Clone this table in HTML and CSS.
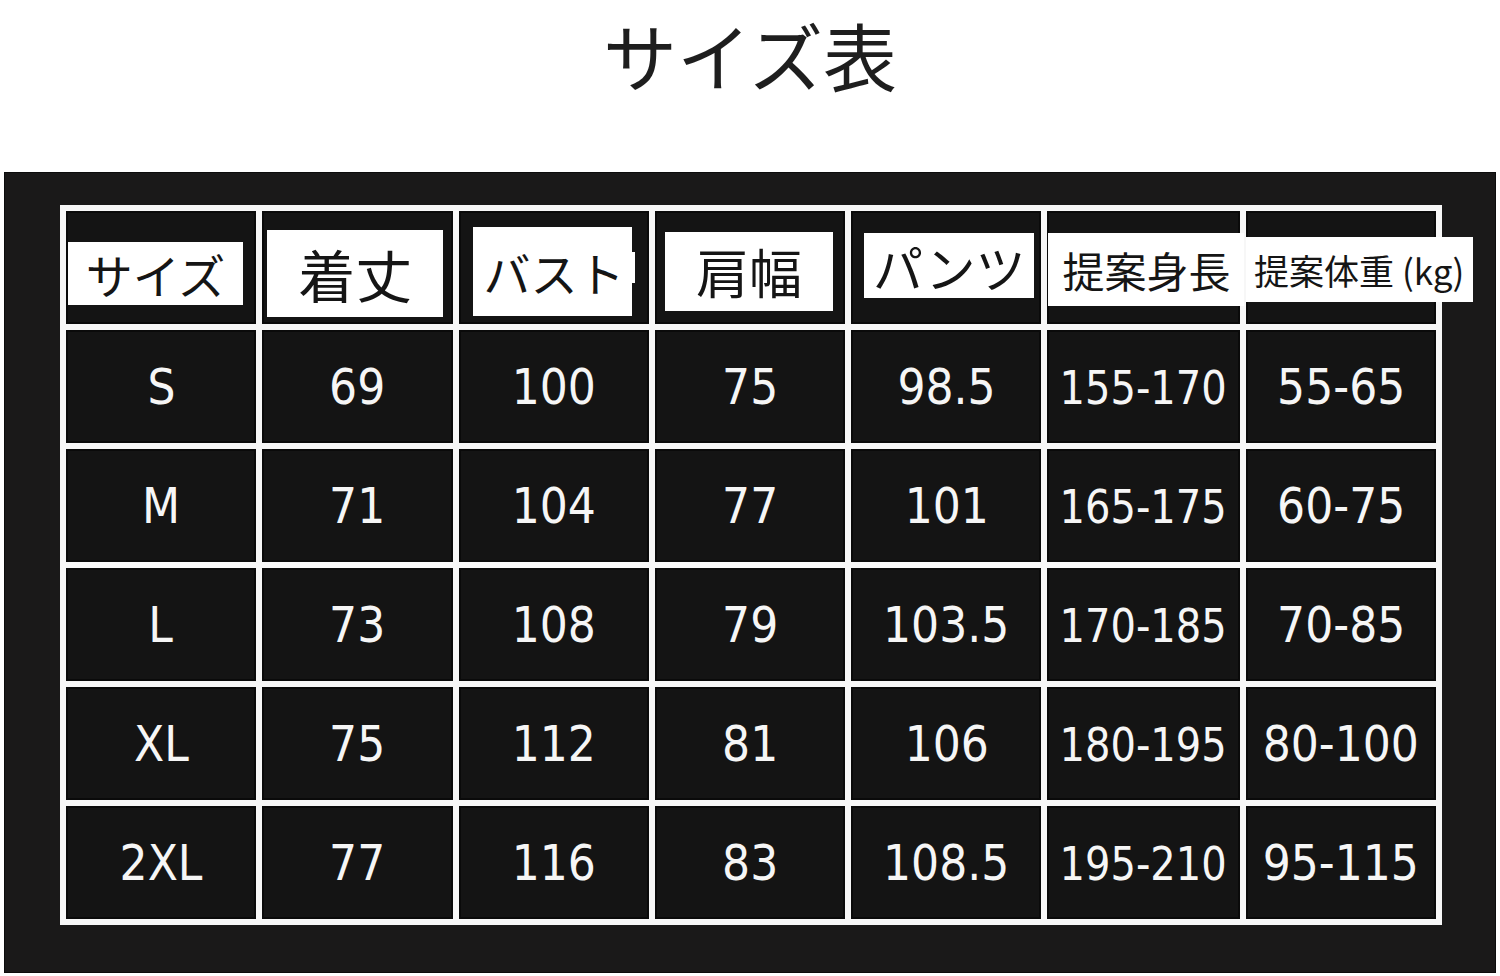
FILE: index.html
```html
<!DOCTYPE html>
<html lang="ja">
<head>
<meta charset="utf-8">
<title>サイズ表</title>
<link rel="stylesheet" href="styles.css">
</head>
<body>
<h1 class="title">サイズ表</h1>
<section class="panel">
  <div class="grid">
    <div class="cell head"><span class="label l1">サイズ</span></div>
    <div class="cell head"><span class="label l2">着丈</span></div>
    <div class="cell head"><span class="label l3">バスト</span><span class="sliver"></span></div>
    <div class="cell head"><span class="label l4">肩幅</span></div>
    <div class="cell head"><span class="label l5">パンツ</span></div>
    <div class="cell head"><span class="label l6">提案身長</span></div>
    <div class="cell head"><span class="label l7">提案体重 (kg)</span></div>

    <div class="cell"><span class="v">S</span></div>
    <div class="cell"><span class="v">69</span></div>
    <div class="cell"><span class="v">100</span></div>
    <div class="cell"><span class="v">75</span></div>
    <div class="cell"><span class="v">98.5</span></div>
    <div class="cell"><span class="v narrow">155-170</span></div>
    <div class="cell"><span class="v">55-65</span></div>

    <div class="cell"><span class="v">M</span></div>
    <div class="cell"><span class="v">71</span></div>
    <div class="cell"><span class="v">104</span></div>
    <div class="cell"><span class="v">77</span></div>
    <div class="cell"><span class="v">101</span></div>
    <div class="cell"><span class="v narrow">165-175</span></div>
    <div class="cell"><span class="v">60-75</span></div>

    <div class="cell"><span class="v">L</span></div>
    <div class="cell"><span class="v">73</span></div>
    <div class="cell"><span class="v">108</span></div>
    <div class="cell"><span class="v">79</span></div>
    <div class="cell"><span class="v">103.5</span></div>
    <div class="cell"><span class="v narrow">170-185</span></div>
    <div class="cell"><span class="v">70-85</span></div>

    <div class="cell"><span class="v">XL</span></div>
    <div class="cell"><span class="v">75</span></div>
    <div class="cell"><span class="v">112</span></div>
    <div class="cell"><span class="v">81</span></div>
    <div class="cell"><span class="v">106</span></div>
    <div class="cell"><span class="v narrow">180-195</span></div>
    <div class="cell"><span class="v">80-100</span></div>

    <div class="cell"><span class="v">2XL</span></div>
    <div class="cell"><span class="v">77</span></div>
    <div class="cell"><span class="v">116</span></div>
    <div class="cell"><span class="v">83</span></div>
    <div class="cell"><span class="v">108.5</span></div>
    <div class="cell"><span class="v narrow">195-210</span></div>
    <div class="cell"><span class="v">95-115</span></div>
  </div>
</section>
</body>
</html>
```

FILE: styles.css
```css
html, body {
  margin: 0;
  padding: 0;
  background: #ffffff;
}

body {
  width: 1500px;
  height: 976px;
  overflow: hidden;
  font-family: "Noto Sans CJK JP", "Noto Sans", sans-serif;
}

.title {
  margin: 0;
  height: 172px;
  font-family: "Noto Sans CJK JP", sans-serif;
  font-weight: 400;
  font-size: 74px;
  line-height: normal;
  text-align: center;
  color: #1e1e1e;
  letter-spacing: 0;
}

.panel {
  margin-left: 4px;
  width: 1492px;
  height: 801px;
  box-sizing: border-box;
  padding: 33px 54px 48px 56px;
  background: #1a1919;
  box-shadow: inset 0 0 0 1px #0c0c0c;
}

.grid {
  display: grid;
  grid-template-columns: repeat(7, 1fr);
  grid-template-rows: repeat(6, 1fr);
  gap: 6px;
  padding: 6px;
  height: 720px;
  box-sizing: border-box;
  background: #f7f7f7;
}

.cell {
  position: relative;
  display: flex;
  align-items: center;
  justify-content: center;
  background: #141414;
  box-shadow: inset 0 0 0 2px #0a0a0a;
}

.v {
  display: inline-block;
  font-family: "DejaVu Sans", sans-serif;
  font-size: 49px;
  color: #f6f6f6;
  transform: scaleX(0.9);
  white-space: nowrap;
  padding-top: 2px;
}

.v.narrow {
  font-size: 46px;
  transform: scaleX(0.87);
}

.label {
  position: absolute;
  display: flex;
  align-items: center;
  justify-content: center;
  background: #ffffff;
  color: #151515;
  font-family: "Noto Sans CJK JP", sans-serif;
  font-weight: 400;
  line-height: 1;
  white-space: nowrap;
  z-index: 1;
}

.l1 { left: 2px;  top: 31px; width: 175px; height: 63px; font-size: 47px; }
.l2 { left: 5px;  top: 19px; width: 176px; height: 87px; font-size: 57px; }
.l3 { left: 14px; top: 16px; width: 159px; height: 89px; font-size: 47px; padding-left: 4px; box-sizing: border-box; }
.l4 { left: 10px; top: 21px; width: 168px; height: 79px; font-size: 53px; }
.l5 { left: 13px; top: 22px; width: 170px; height: 65px; font-size: 50px; }
.l6 { left: 1px;  top: 22px; width: 196px; height: 73px; font-size: 42px; }
.l7 { left: 0;    top: 26px; width: 227px; height: 65px; font-size: 35px; }

.sliver {
  position: absolute;
  left: 173px;
  top: 41px;
  width: 3px;
  height: 31px;
  background: #ffffff;
}
```
